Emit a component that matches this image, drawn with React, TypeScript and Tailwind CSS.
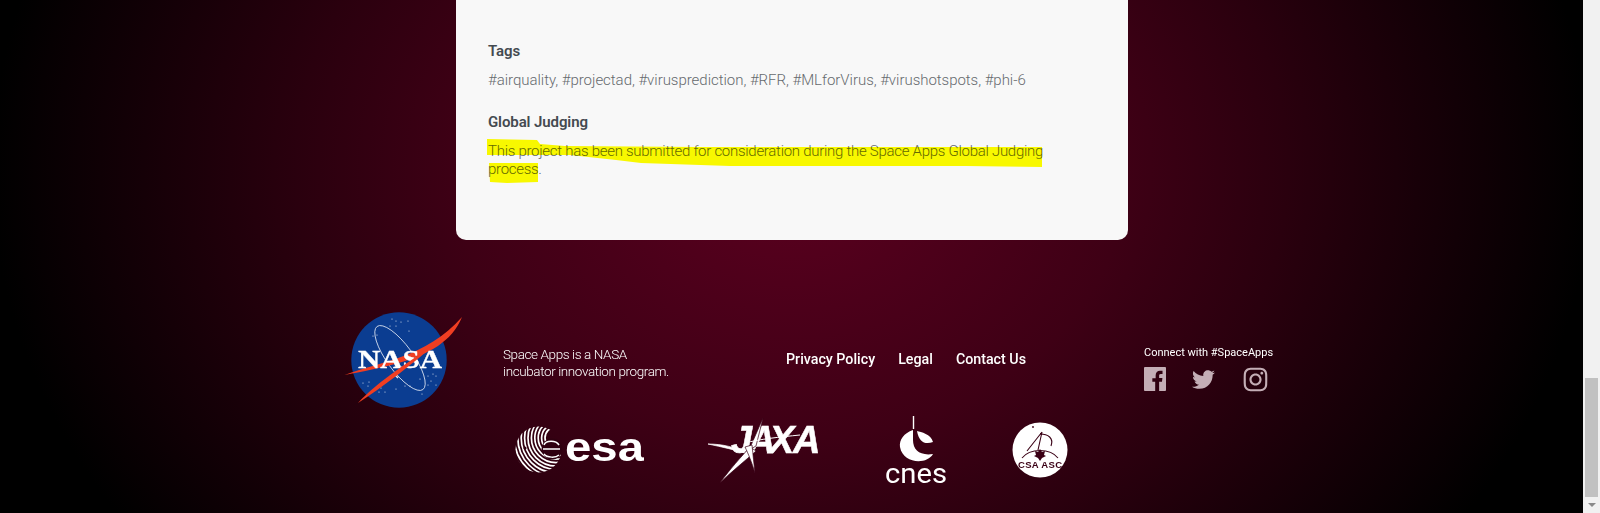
import { FaInstagram, FaTwitter } from "react-icons/fa";

const stars = [
  [392, 319], [396, 321], [401, 322], [408, 321], [409, 331], [396, 326], [390, 326], [373, 336], [377, 335],
  [363, 383], [369, 382], [368, 386], [377, 388], [381, 388], [379, 392], [385, 392], [396, 389], [405, 386],
  [410, 386], [422, 394], [433, 374], [436, 376], [431, 381], [436, 385], [428, 385], [420, 379], [428, 376],
];

const NasaLogo = () => (
  <svg width="120" height="100" viewBox="344 310 120 100" className="shrink-0">
    <circle cx="399" cy="360" r="47.7" fill="#0b3d91" />
    {stars.map(([x, y]) => (
      <circle key={`${x}-${y}`} cx={x} cy={y} r="0.6" fill="#fff" opacity="0.85" />
    ))}
    <ellipse cx="400" cy="358" rx="13" ry="39" transform="rotate(-36 400 358)" fill="none" stroke="#dfe6f2" strokeWidth="0.8" />
    <path d="M394 374 L398 378" stroke="#dfe6f2" strokeWidth="1.6" />
    <path d="M344.5 375 C378 362 426 358 462 317 C452 342 428 354 402 362 C386 367 360 372 344.5 375 Z" fill="#f03e22" />
    <text x="400" y="368" textAnchor="middle" fill="#fff" fontFamily="'Liberation Serif', serif" fontWeight="700" fontSize="26" textLength="84" lengthAdjust="spacingAndGlyphs" stroke="#fff" strokeWidth="0.3">
      NASA
    </text>
    <path d="M358 403 C374 385 402 366 438 342 C410 366 384 386 358 403 Z" fill="#f03e22" />
  </svg>
);

const EsaLogo = () => (
  <svg width="130" height="50" viewBox="514 423 130 50" className="shrink-0">
    <defs>
      <clipPath id="esaClip">
        <circle cx="538.5" cy="447.5" r="23" />
      </clipPath>
    </defs>
    <g clipPath="url(#esaClip)" fill="none" stroke="#fff" strokeWidth="1.7">
      {[3, 6.4, 9.8, 13.2, 16.6, 20, 23.4, 26.8, 30.2, 33.6, 37].map((r) => (
        <circle key={r} cx="556" cy="436" r={r + 8} />
      ))}
    </g>
    <circle cx="525" cy="446" r="1.6" fill="#2f0010" />
    <circle cx="552" cy="447" r="10.5" fill="#2f0010" />
    <path d="M544 443 C546 438 556 438 559 443 M543 447 H560 M544 452 C547 456 556 456 559 453" fill="none" stroke="#fff" strokeWidth="1.5" />
    <text x="565" y="459" fill="#fff" fontFamily="'Liberation Sans', sans-serif" fontWeight="700" fontSize="41" textLength="79" lengthAdjust="spacingAndGlyphs">
      esa
    </text>
  </svg>
);

const JaxaLogo = () => (
  <svg width="110" height="67" viewBox="708 416 110 67" className="shrink-0 overflow-visible">
    <text x="731 748 769 793" y="452" fill="#fff" fontFamily="'Liberation Sans', sans-serif" fontStyle="italic" fontWeight="700" fontSize="38" stroke="#fff" strokeWidth="0.5">
      JAXA
    </text>
    <path d="M708 443 C722 443 736 446 748 453 C736 449 722 446 708 443 Z" fill="#fff" stroke="#fff" strokeWidth="0.7" />
    <path d="M763 417 L749 449 L756 445 Z" fill="#fff" stroke="#3a0015" strokeWidth="0.7" />
    <path d="M720 482 C730 468 741 456 750 446 L756 450 C745 460 732 470 720 482 Z" fill="#fff" stroke="#3a0015" strokeWidth="0.7" />
    <path d="M755 472 C752 462 748 452 745 446 L752 444 C753 454 754 463 755 472 Z" fill="#fff" stroke="#3a0015" strokeWidth="0.7" />
    <path d="M745 442 C760 438 780 436 800 434" stroke="#fff" strokeWidth="1" fill="none" />
  </svg>
);

const CnesLogo = () => (
  <svg width="62" height="68" viewBox="885 415 62 68" className="shrink-0 overflow-visible">
    <path d="M913.5 415 V428" stroke="#fff" strokeWidth="1.4" />
    <path d="M913 429 V439 C913 449 920 455 933 453 C927 464 903 463 900 446 C899 439 904 432 913 429 Z" fill="#fff" />
    <path d="M917 430 C921 431 931 433 933 441 C925 444 919 441 917 430 Z" fill="#fff" />
    <text x="885" y="482" fill="#fff" fontFamily="Roboto, sans-serif" fontWeight="400" fontSize="27" textLength="62" lengthAdjust="spacingAndGlyphs">
      cnes
    </text>
  </svg>
);

const CsaLogo = () => (
  <svg width="56" height="56" viewBox="1012 420 56 56" className="shrink-0">
    <circle cx="1040" cy="448" r="27.5" fill="#fff" />
    <circle cx="1033" cy="425" r="0.9" fill="#3a0015" />
    <path d="M1042 430 L1027 449 M1042 430 L1038 448 M1040 432 C1048 432 1054 436 1051 444 M1022 456 C1030 446 1050 446 1058 456" fill="none" stroke="#3a0015" strokeWidth="1.1" />
    <path d="M1040 447 L1042 450 L1045 449 L1044 453 L1046 454 L1042 456 L1040 459 L1038 456 L1034 454 L1036 453 L1035 449 L1038 450 Z" fill="#3a0015" />
    <text x="1040" y="466" textAnchor="middle" fill="#3a0015" fontFamily="'Liberation Sans', sans-serif" fontWeight="700" fontSize="9.5" textLength="44" lengthAdjust="spacing">
      CSA ASC
    </text>
  </svg>
);

const App = () => {
  return (
    <div className="flex h-[513px] w-full overflow-hidden font-['Roboto',sans-serif]">
      <div className="h-full flex-1 bg-[radial-gradient(ellipse_800px_640px_at_50%_170px,#5c001f_0%,#4c001a_22%,#3e0015_42%,#2a000e_62%,#150007_81%,#000000_100%)]">
        <div className="relative ml-[456px] h-[240px] w-[672px] rounded-b-[10px] bg-[#f8f8f8] px-8 pt-[42px]">
          <h3 className="text-[15px] leading-[18px] font-semibold tracking-[-0.1px] text-[#444a50]">Tags</h3>
          <p className="mt-[11px] text-[15px] leading-[18px] font-light tracking-[-0.03px] whitespace-nowrap text-[#666a6e]">
            #airquality, #projectad, #virusprediction, #RFR, #MLforVirus, #virushotspots, #phi-6
          </p>
          <h3 className="mt-[24px] text-[15px] leading-[18px] font-semibold tracking-[-0.1px] text-[#444a50]">Global Judging</h3>
          <p className="mt-[11px] w-[570px] text-[15px] leading-[18px] font-light tracking-[-0.28px] text-[#666a6e]">
            This project has been submitted for consideration during the Space Apps Global Judging process.
          </p>
          <svg width="672" height="240" viewBox="456 0 672 240" className="absolute top-0 left-0 mix-blend-multiply">
            <path
              d="M487 139 L537 140 L540 144 L565 146 L700 147 L1042 147 L1042 167 L965 166 L857 166 L730 166 L641 163 L616 160 L570 155 L487 155 Z M489 163 L538 163 L538 182 L507 183 L490 182 Z"
              fill="#ffff00"
            />
          </svg>
        </div>

        <footer className="ml-[344px] w-[940px] text-white">
          <div className="mt-[70px] flex h-[100px] items-center">
            <NasaLogo />
            <p className="mt-[6px] ml-[39px] w-[200px] text-[13.5px] leading-[17px] font-light tracking-[-0.4px] whitespace-nowrap">
              Space Apps is a NASA
              <br />
              incubator innovation program.
            </p>
            <nav className="ml-[83px] flex w-[240px] gap-[23px] text-[14.25px] font-medium whitespace-nowrap">
              <span>Privacy Policy</span>
              <span>Legal</span>
              <span>Contact Us</span>
            </nav>
            <div className="mt-[18px] ml-[118px] shrink-0">
              <p className="text-[11px] leading-[14px] whitespace-nowrap">Connect with #SpaceApps</p>
              <div className="mt-[6px] flex items-center text-[#c4aeb6]">
                <svg width="22" height="24" viewBox="0 0 24 24" preserveAspectRatio="none" fill="currentColor">
                  <path d="M1 0h22a1 1 0 011 1v22a1 1 0 01-1 1h-6.5v-9.3h3.1l.5-3.6h-3.6V8.8c0-1 .3-1.8 1.8-1.8h1.9V3.8c-.3 0-1.5-.1-2.8-.1-2.8 0-4.7 1.7-4.7 4.8v2.7H9.1v3.6h3.1V24H1a1 1 0 01-1-1V1a1 1 0 011-1z" />
                </svg>
                <FaTwitter className="ml-[26px] size-[23px]" />
                <FaInstagram className="ml-[27px] size-[27px]" />
              </div>
            </div>
          </div>
          <div className="mt-[6px] flex items-center">
            <div className="ml-[170px]"><EsaLogo /></div>
            <div className="ml-[64px]"><JaxaLogo /></div>
            <div className="ml-[67px]"><CnesLogo /></div>
            <div className="ml-[65px]"><CsaLogo /></div>
          </div>
        </footer>
      </div>

      <div className="flex h-full w-[17px] shrink-0 flex-col items-center bg-[#f1f1f1]">
        <div className="mt-[378px] h-[119px] w-[13px] bg-[#c1c1c1]" />
        <div className="mt-[6px] h-0 w-0 border-x-[4px] border-t-[4px] border-x-transparent border-t-[#8a8a8a]" />
      </div>
    </div>
  );
};

export default App;
